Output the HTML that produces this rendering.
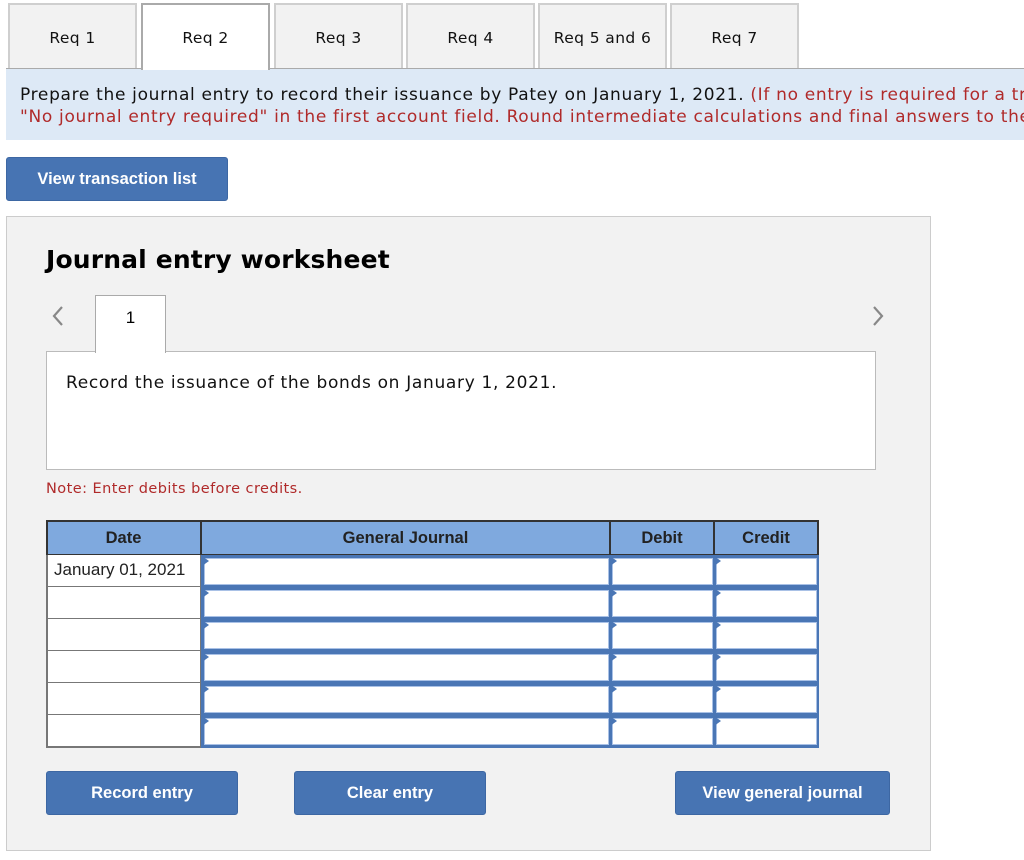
<!DOCTYPE html>
<html><head><meta charset="utf-8"><style>
*{margin:0;padding:0;box-sizing:border-box}
body{width:1024px;height:860px;background:#fff;position:relative;overflow:hidden;font-family:"DejaVu Sans","Liberation Sans",sans-serif}
.a{position:absolute}
.tab{position:absolute;top:3px;height:66px;width:129px;background:#f2f2f2;border:2px solid #cfcfcf;border-bottom:none;font-size:15.5px;letter-spacing:0.4px;color:#111;text-align:center;line-height:66px}
.tab.on{background:#fff;border-color:#aaa;height:67px;z-index:2}
.btn{position:absolute;background:#4774b3;color:#fff;font-family:"Liberation Sans",sans-serif;font-weight:bold;font-size:16.5px;text-align:center;border-radius:3px;border:1px solid #3d67a3}
.ar{font-family:"Liberation Sans",sans-serif}
.dc{position:absolute;left:46px;width:156px;height:33px;background:#fff;border:2px solid #777;border-top:none;font-family:"Liberation Sans",sans-serif;font-size:17px;color:#222;padding-left:6px;line-height:30px}
.ic{position:absolute;background:#4a76b5;}
.ic i{position:absolute;left:3px;top:3px;right:2px;bottom:3px;background:#fff;border:1px solid #a9c1e6}
.ic b{position:absolute;left:1px;top:1px;width:0;height:0;border-top:5px solid transparent;border-bottom:5px solid transparent;border-left:7px solid #4a76b5;z-index:2}
.t{font-size:17px;letter-spacing:0.68px}
</style></head><body>
<div class="tab" style="left:8px">Req 1</div>
<div class="tab on" style="left:141px">Req 2</div>
<div class="tab" style="left:274px">Req 3</div>
<div class="tab" style="left:406px">Req 4</div>
<div class="tab" style="left:538px">Req 5 and 6</div>
<div class="tab" style="left:670px">Req 7</div>
<div class="a t" style="left:6px;top:68px;width:1018px;height:72px;overflow:hidden;background:#dde9f6;border-top:1px solid #aaa;line-height:22px;padding:15px 0 0 14px;white-space:nowrap;color:#111">Prepare the journal entry to record their issuance by Patey on January 1, 2021. <span style="color:#b02a2a">(If no entry is required for a transaction/event, select<br>"No journal entry required" in the first account field. Round intermediate calculations and final answers to the nearest whole dollar.)</span></div>
<div class="btn" style="left:6px;top:157px;width:222px;height:44px;line-height:42px">View transaction list</div>
<div class="a" style="left:6px;top:216px;width:925px;height:635px;background:#f2f2f2;border:1px solid #ccc"></div>
<div class="a" style="left:46px;top:245px;font-size:25px;letter-spacing:0.15px;font-weight:bold;color:#000">Journal entry worksheet</div>
<svg class="a" style="left:50px;top:305px" width="16" height="24"><path d="M12 2 L4 11 L12 20" fill="none" stroke="#888" stroke-width="2.2"/></svg>
<svg class="a" style="left:870px;top:305px" width="16" height="24"><path d="M4 2 L12 11 L4 20" fill="none" stroke="#888" stroke-width="2.2"/></svg>
<div class="a" style="left:46px;top:351px;width:830px;height:119px;background:#fff;border:1px solid #bbb"></div>
<div class="a" style="left:95px;top:295px;width:71px;height:58px;background:#fff;border:1px solid #aaa;border-bottom:none;font-family:'Liberation Sans',sans-serif;font-size:17px;text-align:center;line-height:44px">1</div>
<div class="a t" style="left:66px;top:373px;color:#111">Record the issuance of the bonds on January 1, 2021.</div>
<div class="a" style="left:46px;top:481px;font-size:14.5px;letter-spacing:0.45px;color:#b02a2a">Note: Enter debits before credits.</div>
<div class="a" style="left:46px;top:520px;width:773px;height:36px;background:#7fa9de;border:2px solid #333"></div>
<div class="a" style="left:200px;top:520px;width:2px;height:36px;background:#333"></div>
<div class="a" style="left:609px;top:520px;width:2px;height:36px;background:#333"></div>
<div class="a" style="left:713px;top:520px;width:2px;height:36px;background:#333"></div>
<div class="a ar" style="left:46px;top:529px;width:155px;text-align:center;font-weight:bold;font-size:16.5px;color:#222">Date</div>
<div class="a ar" style="left:201px;top:529px;width:409px;text-align:center;font-weight:bold;font-size:16.5px;color:#222">General Journal</div>
<div class="a ar" style="left:610px;top:529px;width:104px;text-align:center;font-weight:bold;font-size:16.5px;color:#222">Debit</div>
<div class="a ar" style="left:714px;top:529px;width:104px;text-align:center;font-weight:bold;font-size:16.5px;color:#222">Credit</div>

<div class="dc" style="top:555px">January 01, 2021</div>
<div class="dc" style="top:587px"></div>
<div class="dc" style="top:619px"></div>
<div class="dc" style="top:651px"></div>
<div class="dc" style="top:683px"></div>
<div class="dc" style="top:715px"></div>

<div class="ic" style="left:201px;top:555px;width:410px;height:33px"><b></b><i></i></div>
<div class="ic" style="left:609px;top:555px;width:106px;height:33px"><b></b><i></i></div>
<div class="ic" style="left:713px;top:555px;width:106px;height:33px"><b></b><i></i></div>
<div class="ic" style="left:201px;top:587px;width:410px;height:33px"><b></b><i></i></div>
<div class="ic" style="left:609px;top:587px;width:106px;height:33px"><b></b><i></i></div>
<div class="ic" style="left:713px;top:587px;width:106px;height:33px"><b></b><i></i></div>
<div class="ic" style="left:201px;top:619px;width:410px;height:33px"><b></b><i></i></div>
<div class="ic" style="left:609px;top:619px;width:106px;height:33px"><b></b><i></i></div>
<div class="ic" style="left:713px;top:619px;width:106px;height:33px"><b></b><i></i></div>
<div class="ic" style="left:201px;top:651px;width:410px;height:33px"><b></b><i></i></div>
<div class="ic" style="left:609px;top:651px;width:106px;height:33px"><b></b><i></i></div>
<div class="ic" style="left:713px;top:651px;width:106px;height:33px"><b></b><i></i></div>
<div class="ic" style="left:201px;top:683px;width:410px;height:33px"><b></b><i></i></div>
<div class="ic" style="left:609px;top:683px;width:106px;height:33px"><b></b><i></i></div>
<div class="ic" style="left:713px;top:683px;width:106px;height:33px"><b></b><i></i></div>
<div class="ic" style="left:201px;top:715px;width:410px;height:33px"><b></b><i></i></div>
<div class="ic" style="left:609px;top:715px;width:106px;height:33px"><b></b><i></i></div>
<div class="ic" style="left:713px;top:715px;width:106px;height:33px"><b></b><i></i></div>

<div class="btn" style="left:46px;top:771px;width:192px;height:44px;line-height:42px">Record entry</div>
<div class="btn" style="left:294px;top:771px;width:192px;height:44px;line-height:42px">Clear entry</div>
<div class="btn" style="left:675px;top:771px;width:215px;height:44px;line-height:42px">View general journal</div>
</body></html>
